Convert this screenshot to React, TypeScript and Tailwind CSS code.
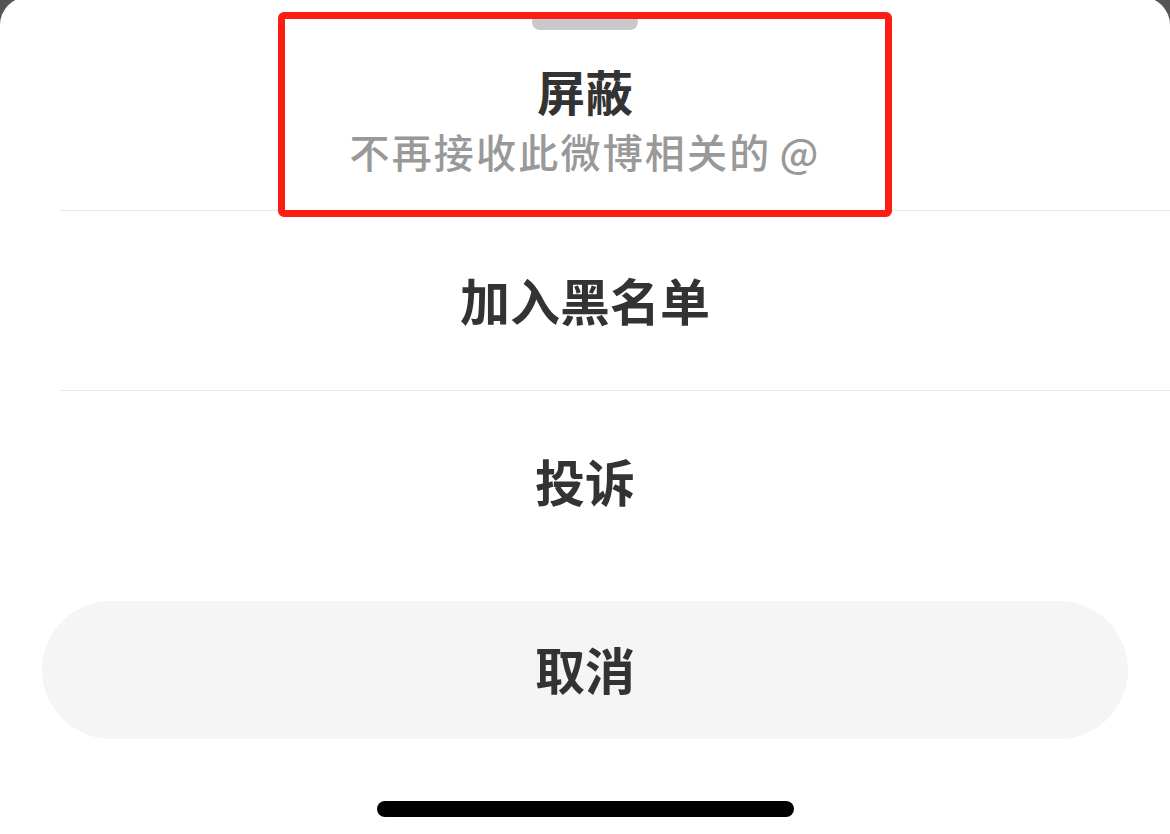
import React from 'react';

const cjk = 'font-["Noto_Sans_CJK_SC","Noto_Sans",sans-serif]';

export default function App() {
  return (
    <div className={`relative w-[1170px] h-[834px] overflow-hidden bg-[#555555] ${cjk}`}>
      <div className="-mt-[3px] h-[837px] bg-white rounded-t-[28px] flex flex-col">
        {/* grabber */}
        <div className="mx-auto mt-[17px] w-[106px] h-[16px] rounded-[8px] bg-[#c9c8cd]" />

        {/* mute */}
        <div className="h-[180px] flex flex-col items-center pt-[32px]">
          <span className="text-[48px] leading-[56px] font-semibold text-[#333333]">屏蔽</span>
          <span className="mt-[9px] text-[40px] leading-[48px] tracking-[2.2px] font-medium text-[#999999]">
            不再接收此微博相关的<span className="ml-[8px]">@</span>
          </span>
        </div>
        <div className="ml-[60px] h-px bg-[#e8e8e8]" />

        <div className="h-[179px] flex items-center justify-center pb-[3px]">
          <span className="text-[50px] leading-[58px] font-semibold text-[#333333]">加入黑名单</span>
        </div>
        <div className="ml-[60px] h-px bg-[#e8e8e8]" />

        <div className="h-[186px] flex items-center justify-center pb-[8px]">
          <span className="text-[50px] leading-[58px] font-semibold text-[#333333]">投诉</span>
        </div>

        <button className="mx-[42px] mt-[24px] h-[138px] rounded-full bg-[#f5f5f5] flex items-center justify-center pb-[4px]">
          <span className="text-[50px] leading-[58px] font-semibold text-[#333333]">取消</span>
        </button>

        {/* home indicator */}
        <div className="mx-auto mt-[62px] w-[417px] h-[16px] rounded-full bg-black" />
      </div>

      {/* red annotation box */}
      <div className="absolute left-[278px] top-[12px] w-[614px] h-[205px] border-[7px] border-[#fc1e14] rounded-[6px]" />
    </div>
  );
}
